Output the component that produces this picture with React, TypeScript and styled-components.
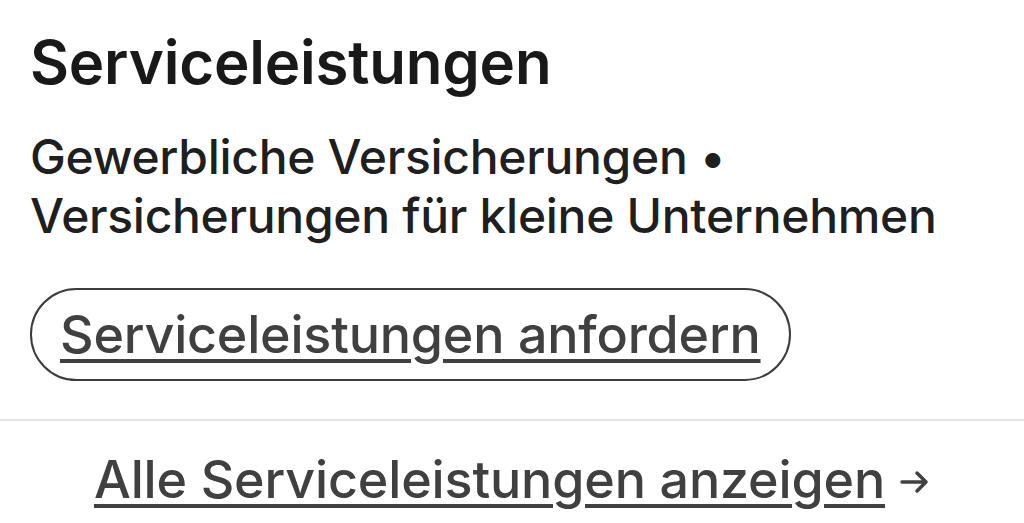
import React from 'react'
import styled, { createGlobalStyle } from 'styled-components'

const GlobalStyle = createGlobalStyle`
  html, body {
    margin: 0;
    padding: 0;
    background: #ffffff;
  }
  body {
    font-family: Inter, 'Noto Sans', sans-serif;
    -webkit-font-smoothing: antialiased;
  }
`

const Section = styled.section`
  width: 1024px;
  height: 523px;
  overflow: hidden;
  background: #ffffff;
  display: flex;
  flex-direction: column;
`

const Body = styled.div`
  padding: 24px 30px 0 30px;
  display: flex;
  flex-direction: column;
`

const Title = styled.h2`
  margin: 0;
  font-size: 60px;
  line-height: 76px;
  font-weight: 600;
  letter-spacing: -0.2px;
  color: rgba(0, 0, 0, 0.9);
`

const Services = styled.p`
  margin: 27px 0 0 0;
  font-size: 48px;
  line-height: 59px;
  font-weight: 500;
  letter-spacing: -0.3px;
  color: rgba(0, 0, 0, 0.9);
`

const RequestButton = styled.button`
  margin-top: 43px;
  align-self: flex-start;
  height: 93px;
  padding: 0 28px;
  border: 2px solid #3c3c3c;
  border-radius: 47px;
  background: transparent;
  font-family: inherit;
  font-size: 52px;
  font-weight: 500;
  letter-spacing: -0.2px;
  color: #404040;
  text-decoration: underline;
  text-decoration-thickness: 4px;
  text-underline-offset: 6px;
  cursor: pointer;
`

const Divider = styled.hr`
  margin: 38px 0 0 0;
  border: none;
  border-top: 2px solid #e8e8e8;
`

const Footer = styled.div`
  display: flex;
  justify-content: center;
  align-items: center;
  gap: 15px;
  padding-top: 26px;
`

const ShowAllLink = styled.a`
  font-size: 52px;
  line-height: 66px;
  font-weight: 500;
  letter-spacing: -0.15px;
  color: #404040;
  text-decoration: underline;
  text-decoration-thickness: 4px;
  text-underline-offset: 6px;
`

const Arrow = styled.span`
  display: flex;
  align-items: center;
  margin-top: 4px;
  color: #404040;
`

const App = () => {
  return (
    <>
      <GlobalStyle />
      <Section>
        <Body>
          <Title>Serviceleistungen</Title>
          <Services>
            Gewerbliche Versicherungen •<br />
            Versicherungen für kleine Unternehmen
          </Services>
          <RequestButton>Serviceleistungen anfordern</RequestButton>
        </Body>
        <Divider />
        <Footer>
          <ShowAllLink href="#">Alle Serviceleistungen anzeigen</ShowAllLink>
          <Arrow>
            <svg width="30" height="24" viewBox="0 0 30 24" fill="none">
              <path d="M2 12 H26 M17 3 L26 12 L17 21" stroke="#404040" strokeWidth="3.5" strokeLinecap="round" strokeLinejoin="round" />
            </svg>
          </Arrow>
        </Footer>
      </Section>
    </>
  )
}

export default App
